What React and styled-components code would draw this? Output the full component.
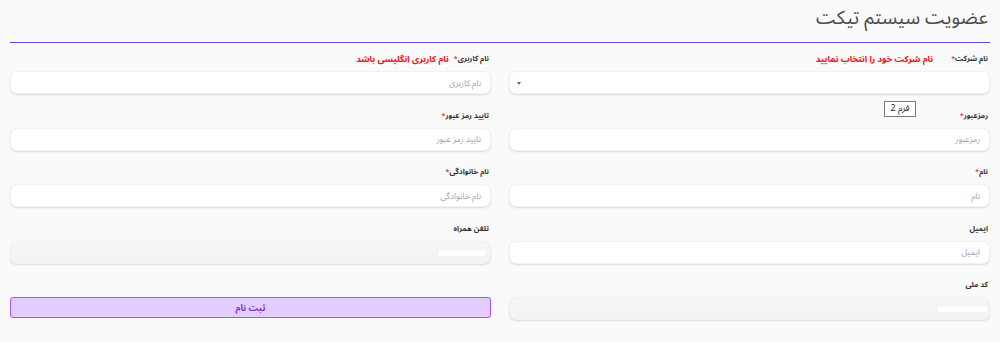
import styled, { createGlobalStyle } from "styled-components";

const GlobalStyle = createGlobalStyle`
  html, body {
    margin: 0;
    padding: 0;
    background: #fafafa;
    font-family: "Noto Sans Arabic", "Vazirmatn", "DejaVu Sans", sans-serif;
  }
`;

const Page = styled.div`
  direction: rtl;
  padding: 0 10px;
  width: 1000px;
  height: 342px;
  box-sizing: border-box;
  background: #fafafa;
`;

const Header = styled.div`
  height: 42px;
  border-bottom: 1px solid #5b50e8;
  display: flex;
  align-items: center;
`;

const Title = styled.h1`
  margin: 0;
  padding: 0 2px 6px 0;
  font-size: 19px;
  font-weight: 400;
  color: #4a4a4a;
`;

const Grid = styled.div`
  display: grid;
  grid-template-columns: 1fr 1fr;
  column-gap: 18px;
  padding-top: 8px;
`;

const Column = styled.div`
  display: flex;
  flex-direction: column;
  gap: 13.5px;
`;

const Field = styled.div`
  position: relative;
  display: flex;
  flex-direction: column;
`;

const LabelRow = styled.div`
  height: 16px;
  margin-bottom: 4px;
  display: flex;
  align-items: center;
  gap: ${(p) => p.$gap ?? 18}px;
  padding-right: 2px;
`;

const Label = styled.label`
  font-size: 7.5px;
  font-weight: 700;
  color: #333;
`;

const Star = styled.span`
  color: #ef4444;
  font-size: 7px;
`;

const Hint = styled.span`
  color: #f2101a;
  font-size: 8.8px;
  font-weight: 700;
`;

const Input = styled.div`
  height: 23px;
  box-sizing: border-box;
  border-radius: 7px;
  background: ${(p) => (p.$disabled ? "#f3f4f6" : "#fff")};
  border: 1px solid ${(p) => (p.$disabled ? "#f0f1f3" : "#f2f2f2")};
  box-shadow: 0 1px 2px rgba(0, 0, 0, 0.13);
  display: flex;
  align-items: center;
  justify-content: space-between;
  padding: 0 9px 0 7px;
  font-size: 8.5px;
  color: #9ca3af;
`;

const Caret = styled.span`
  width: 0;
  height: 0;
  border-left: 2.5px solid transparent;
  border-right: 2.5px solid transparent;
  border-top: 3px solid #666;
  margin-top: 1px;
`;

const Masked = styled.span`
  display: block;
  width: ${(p) => p.$w}px;
  height: 6px;
  background: #fff;
  border-top: 1px dotted #e5e7eb;
  margin-right: ${(p) => p.$offset}px;
`;

const FormTag = styled.div`
  position: absolute;
  top: -7px;
  right: 74px;
  width: 32px;
  height: 16px;
  box-sizing: border-box;
  border: 1px solid #777;
  background: #fff;
  font-size: 9px;
  color: #222;
  display: flex;
  align-items: center;
  justify-content: center;
`;

const Submit = styled.button`
  margin-top: 20px;
  height: 21px;
  border: 1.5px solid #a855f7;
  border-radius: 3px;
  background: #e3cdfe;
  color: #7c34c4;
  font-family: inherit;
  font-size: 9px;
  font-weight: 700;
  cursor: pointer;
`;

const TextField = ({ label, required, hint, gap, placeholder, disabled, mask, maskOffset = -4, children }) => (
  <Field>
    <LabelRow $gap={gap}>
      <Label>
        {label}
        {required && <Star>*</Star>}
      </Label>
      {hint && <Hint>{hint}</Hint>}
    </LabelRow>
    <Input $disabled={disabled}>
      {mask ? <Masked $w={mask} $offset={maskOffset} /> : <span>{placeholder}</span>}
      {children}
    </Input>
  </Field>
);

const App = () => {
  return (
    <>
      <GlobalStyle />
      <Page>
        <Header>
          <Title>عضویت سیستم تیکت</Title>
        </Header>
        <Grid>
          <Column>
            <TextField label="نام شرکت" required hint="نام شرکت خود را انتخاب نمایید" gap={18}>
              <Caret />
            </TextField>
            <Field>
              <FormTag>فرم 2</FormTag>
              <LabelRow>
                <Label>
                  رمزعبور<Star>*</Star>
                </Label>
              </LabelRow>
              <Input>
                <span>رمزعبور</span>
              </Input>
            </Field>
            <TextField label="نام" required placeholder="نام" />
            <TextField label="ایمیل" placeholder="ایمیل" />
            <TextField label="کد ملی" disabled mask={49} maskOffset={-7} />
          </Column>
          <Column>
            <TextField label="نام کاربری" required hint="نام کاربری انگلیسی باشد" gap={5} placeholder="نام کاربری" />
            <TextField label="تایید رمز عبور" required placeholder="تایید رمز عبور" />
            <TextField label="نام خانوادگی" required placeholder="نام خانوادگی" />
            <TextField label="تلفن همراه" disabled mask={46} />
            <Submit>ثبت نام</Submit>
          </Column>
        </Grid>
      </Page>
    </>
  );
};

export default App;
